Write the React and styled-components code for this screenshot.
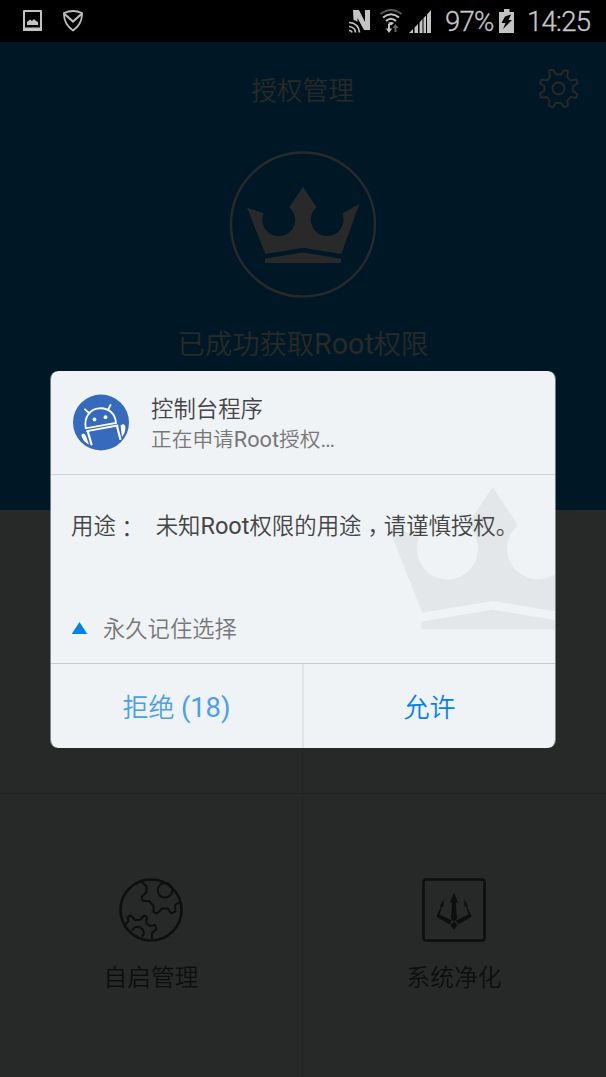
import React from "react";
import styled, { createGlobalStyle } from "styled-components";

const GlobalStyle = createGlobalStyle`
    body {
        margin: 0;
        background-color: #272928;
        font-family: Roboto, "Noto Sans CJK SC", sans-serif;
        font-weight: 350;
    }
`;

const Screen = styled.div`
    position: relative;
    width: 606px;
    height: 1077px;
    overflow: hidden;
    display: flex;
    flex-direction: column;
`;

const StatusBar = styled.div`
    height: 42px;
    box-sizing: border-box;
    padding: 0 15px 0 22px;
    display: flex;
    align-items: center;
    justify-content: space-between;
    background-color: #000;
    color: #c8c8c8;
`;

const StatusGroup = styled.div`
    display: flex;
    align-items: center;
    gap: ${(props) => props.$gap}px;
`;

const StatusText = styled.span`
    width: ${(props) => props.$width}px;
    font-size: 27.5px;
    font-weight: 300;
    line-height: 42px;
    padding-top: 2px;
    letter-spacing: ${(props) => props.$spacing || 0}px;
    -webkit-text-stroke: 0.3px #c8c8c8;
`;

const Hero = styled.header`
    height: 468px;
    box-sizing: border-box;
    background-color: #001825;
    color: #292929;
    display: flex;
    flex-direction: column;
    align-items: center;
`;

const TitleBar = styled.div`
    width: 100%;
    height: 94px;
    box-sizing: border-box;
    padding: 0 27px 0 26px;
    display: grid;
    grid-template-columns: 40px 1fr 40px;
    align-items: center;
`;

const Title = styled.h1`
    grid-column: 2;
    margin: 0;
    padding-top: 4px;
    font-size: 25.7px;
    font-weight: inherit;
    line-height: 40px;
    text-align: center;
`;

const Badge = styled.svg`
    display: block;
    margin: 14px 0 27px;
`;

const RootState = styled.div`
    font-size: 27.3px;
    line-height: 40px;
`;

const Latin = styled.span`
    font-size: 1.05em;
    font-weight: 400;
    line-height: 1;
`;

const Grid = styled.main`
    flex: 1;
    display: grid;
    grid-template-columns: 303px 303px;
    grid-template-rows: 284px 1fr;
`;

const Cell = styled.div`
    box-sizing: border-box;
    border-bottom: 1px solid #202221;
    border-right: 1px solid #222423;
    padding-top: 84px;
    display: flex;
    flex-direction: column;
    align-items: center;
    color: #0d0e0e;
    font-size: 23.7px;
    line-height: 34px;

    &:nth-child(even) {
        border-right: none;
        padding-right: 1px;
    }

    &:nth-child(n + 3) {
        border-bottom: none;
    }

    svg {
        margin-bottom: 19px;
    }
`;

const Dialog = styled.section`
    position: absolute;
    left: 50px;
    top: 371px;
    width: 506px;
    height: 377px;
    box-sizing: border-box;
    border: solid rgba(239, 243, 246, 0.45);
    border-width: 0 1px;
    border-radius: 8px;
    overflow: hidden;
    display: flex;
    flex-direction: column;
    background-color: #eff3f6;
    background-clip: padding-box;
`;

const DialogHeader = styled.div`
    height: 104px;
    box-sizing: border-box;
    border-bottom: 1px solid #cfd3d6;
    padding: 0 22px;
    display: flex;
    align-items: center;
    gap: 21px;
`;

const AppText = styled.div`
    padding-top: 4px;
`;

const AppName = styled.div`
    font-size: 22.4px;
    line-height: 30px;
    color: #444;
`;

const AppAction = styled.div`
    font-size: 20.7px;
    line-height: 32px;
    color: #777;
`;

const DialogBody = styled.div`
    position: relative;
    height: 189px;
    box-sizing: border-box;
    border-bottom: 1px solid #c5cacd;
    padding: 34px 20px 17px;
    display: flex;
    flex-direction: column;
    justify-content: space-between;
`;

const Watermark = styled.svg`
    position: absolute;
    right: 0;
    top: 12px;
`;

const Purpose = styled.div`
    position: relative;
    display: flex;
    gap: 17.5px;
    font-size: 22.4px;
    line-height: 34px;
    color: #444;
    white-space: nowrap;
`;

/* full-width punctuation centred in its cell */
const Mark = styled.span`
    display: inline-block;
    width: 1em;
    font-family: "Noto Sans CJK TC", sans-serif;
    line-height: 1;
    transform: translateY(${(props) => props.$drop || 0}px);
`;

const Remember = styled.div`
    position: relative;
    display: flex;
    align-items: center;
    gap: 15px;
    font-size: 22.3px;
    line-height: 34px;
    color: #777;
`;

const Actions = styled.div`
    flex: 1;
    display: grid;
    grid-template-columns: 251px 1fr;
`;

const Action = styled.button`
    border: none;
    border-left: ${(props) => (props.$divided ? "2px solid #e1e5e8" : "none")};
    padding: 4px 0 0;
    background: none;
    font-family: inherit;
    font-weight: inherit;
    font-size: 26px;
    line-height: 40px;
    color: ${(props) => props.$color};
`;

const CROWN =
    "M56 0L69.5 20.5A16.4 16.4 0 1 0 95.3 26.7L112.3 17.3L94.3 67.3L56 61L18.3 67.3L0 20.7L16.7 26.7A16.4 16.4 0 1 0 42.3 20.5Z" +
    "M18 72L56 65.7L94 72V76.3H18Z";

const GearIcon = () => (
    <svg width="40" height="40" viewBox="0 0 40 40" fill="none" stroke="#292929" strokeWidth="1.8" strokeLinejoin="round">
        <path d="M11 1L14.500 1.200L17 5.500H22L25 1.200L29 2L28.200 8L31.500 11.500L37.500 10.500L38.500 14.500L33.700 17.300V21.700L38.300 25L37 28.800L31.500 28L28.300 31.500L29 36.500L25.500 38.500L22 33.800H17L13.800 38.500L10 37L10.500 31.500L7.500 28L2 28.600L0.800 24.500L5.300 21.700V17.300L0.800 14.200L2.500 10.700L8 11.300L11 8L10 2Z" />
        <circle cx="19.500" cy="19.500" r="6" />
    </svg>
);

const PictureIcon = () => (
    <svg width="21" height="24" viewBox="0 0 21 24">
        <path fill="#c3c3c3" fillRule="evenodd" d="M2 1H19Q20 1 20 2V22H1V2Q1 1 2 1ZM3 3V18.5H18V3Z" />
        <path fill="#c3c3c3" d="M5 16V13L8 10.5L10 12L12 10L14 12L16 13V16Z" />
    </svg>
);

const ShieldIcon = () => (
    <svg width="22" height="24" viewBox="0 0 22 24" fill="none" stroke="#bdbdbd" strokeWidth="1.8">
        <path d="M2 4Q11 0 20 4Q20.500 15 11 21.500Q1.500 15 2 4Z" />
        <path d="M2.500 5L11 12.500L19.500 5" strokeWidth="2.300" />
    </svg>
);

const NfcIcon = () => (
    <svg width="22" height="26" viewBox="0 0 22 26">
        <path fill="#c3c3c3" d="M4 2H10L16 14V2H21V22H15L8.500 10V14Q6.500 12 4.500 12Z" />
        <g fill="none" stroke="#c3c3c3" strokeWidth="1.7">
            <path d="M0 14.500Q9.500 15 10.500 24.500M0 18.500Q6 19 6.500 24.500M0 22.500Q2.500 22.500 3 24.500" />
        </g>
    </svg>
);

const WifiIcon = () => (
    <svg width="24" height="26" viewBox="0 0 24 26" fill="none" strokeWidth="2">
        <path d="M1.500 6Q12 -2 22.500 6" stroke="#5a5a5a" />
        <path d="M4 9.500Q12 3 20 9.500M7 13Q12 8.500 17 13" stroke="#c3c3c3" />
        <path d="M9 15Q12 13 15 15L12 17.500Z" fill="#c3c3c3" />
        <path d="M10 16V22" stroke="#c3c3c3" />
        <path d="M6.800 20.500H13.200L10 25Z" fill="#c3c3c3" />
        <path d="M16.500 24V19" stroke="#666" />
        <path d="M13.500 20L16.500 16L19.500 20Z" fill="#666" />
    </svg>
);

const SignalIcon = () => (
    <svg width="23" height="23" viewBox="0 0 23 23" fill="#c3c3c3">
        <path d="M0 23L4 19V23ZM5.500 17.500L9 14V23H5.500ZM10.500 12.500L13.500 9V23H10.500ZM14.500 8L17 5.500V23H14.500ZM18 4.500L22 0V23H18Z" />
    </svg>
);

const BatteryIcon = () => (
    <svg width="15" height="24" viewBox="0 0 15 24">
        <path fill="#c3c3c3" d="M5 0H10.500V3H15V24H0V3H5Z" />
        <path fill="#000" d="M6 7.500L12 5.500L9.500 11H13L4 20L6.500 14H2.500Z" />
    </svg>
);

const RobotIcon = () => (
    <svg width="57" height="57" viewBox="0 0 57 57">
        <circle cx="28" cy="28.500" r="28" fill="#356abd" />
        <g fill="none" stroke="#fff" strokeWidth="1.800" strokeLinecap="round">
            <path d="M12.800 34.300C10.500 22 18 15 26 14.300C36 13.500 42.500 20 43 29Z" />
            <path d="M16.500 19.500L12 15.300M35 15.800L37.500 11" />
            <path d="M14 37.200L44.500 31.500" strokeWidth="1.800" />
            <path d="M14.800 37.500L18.500 50.500M44 32L47.300 45" strokeWidth="2.200" />
        </g>
        <path fill="#fff" d="M8.300 41Q11 37.500 13 42L16 50.500Q9.500 47.500 8.300 41ZM47.500 31.500Q51 29 52.300 32Q53 38 49 43Z" />
        <circle cx="21.500" cy="25.500" r="1.900" fill="#fff" />
        <circle cx="32.500" cy="23.200" r="1.900" fill="#fff" />
    </svg>
);

const GearsIcon = () => (
    <svg width="64" height="64" viewBox="0 0 64 64" fill="none" stroke="#0d0e0e" strokeWidth="2" strokeLinejoin="round">
        <circle cx="32" cy="32" r="30.500" strokeWidth="2.600" />
        <path d="M22.500 4L27.500 8V14L22.500 19L24 23H30L34.500 28L34.500 34L38 35.500L43 30.500H49L52 35.500L56.500 33.500L56 27L61 24" />
        <circle cx="46" cy="12.300" r="7.300" />
        <path d="M6 47L9.500 43L8.500 39L12 37.500L16 42H21L25 37.500L28 39L27 45L31 48L36 47L37.500 51L33 55V61" />
        <path d="M13 53A6 6 0 1 1 23 59" />
    </svg>
);

const TridentIcon = () => (
    <svg width="64" height="64" viewBox="0 0 64 64" fill="#0d0e0e">
        <rect x="1.500" y="1.500" width="61" height="61" rx="2.500" fill="none" stroke="#0d0e0e" strokeWidth="2.600" />
        <path d="M32 14.500L36 25L33.800 24.500L35 41L32 43.500L29 41L30.200 24.500L28 25Z" />
        <path d="M21.500 21.500L21.800 29L20.500 27.500L17.500 36.500L30 42.500L27.500 46.500L14.300 38.500L19 28.500L17.800 28.500ZM42.500 21.500L42.200 29L43.500 27.500L46.500 36.500L34 42.500L36.500 46.500L49.700 38.500L45 28.500L46.200 28.500Z" />
        <path d="M32 43.500L35.500 47L32 51.500L28.500 47Z" />
    </svg>
);

const App = () => {
    return (
        <Screen>
            <GlobalStyle />
            <StatusBar>
                <StatusGroup $gap={19}>
                    <PictureIcon />
                    <ShieldIcon />
                </StatusGroup>
                <StatusGroup $gap={13}>
                    <StatusGroup $gap={6}>
                        <StatusGroup $gap={8}>
                            <NfcIcon />
                            <WifiIcon />
                        </StatusGroup>
                        <SignalIcon />
                    </StatusGroup>
                    <StatusGroup $gap={5}>
                        <StatusText $width={49} $spacing={-0.8}>97%</StatusText>
                        <BatteryIcon />
                    </StatusGroup>
                    <StatusText $width={64} $spacing={-0.7}>14:25</StatusText>
                </StatusGroup>
            </StatusBar>
            <Hero>
                <TitleBar>
                    <Title>授权管理</Title>
                    <GearIcon />
                </TitleBar>
                <Badge width="148" height="148" viewBox="0 0 148 148">
                    <circle cx="74" cy="74.500" r="72" fill="none" stroke="#292929" strokeWidth="2.400" />
                    <path d={CROWN} fill="#292929" transform="translate(18 36.700)" />
                </Badge>
                <RootState>已成功获取<Latin>Root</Latin>权限</RootState>
            </Hero>
            <Grid>
                <Cell />
                <Cell />
                <Cell>
                    <GearsIcon />
                    自启管理
                </Cell>
                <Cell>
                    <TridentIcon />
                    系统净化
                </Cell>
            </Grid>
            <Dialog>
                <DialogHeader>
                    <RobotIcon />
                    <AppText>
                        <AppName>控制台程序</AppName>
                        <AppAction>正在申请<Latin>Root</Latin>授权<Latin>…</Latin></AppAction>
                    </AppText>
                </DialogHeader>
                <DialogBody>
                    <Watermark width="168" height="144" viewBox="0 0 168 144">
                        <path d={CROWN} fill="#e3e7ea" transform="translate(1 0) scale(1.868)" />
                    </Watermark>
                    <Purpose>
                        <span>用途<Mark $drop={3}>：</Mark></span>
                        <span>未知<Latin>Root</Latin>权限的用途<Mark $drop={7}>，</Mark>请谨慎授权。</span>
                    </Purpose>
                    <Remember>
                        <svg width="17" height="14" viewBox="0 0 17 14">
                            <path d="M8.500 0L16.300 12H0.700Z" fill="#0281ec" />
                        </svg>
                        永久记住选择
                    </Remember>
                </DialogBody>
                <Actions>
                    <Action $color="#4b9fe8">拒绝 <Latin>(18)</Latin></Action>
                    <Action $color="#0281ec" $divided>允许</Action>
                </Actions>
            </Dialog>
        </Screen>
    );
};

export default App;
